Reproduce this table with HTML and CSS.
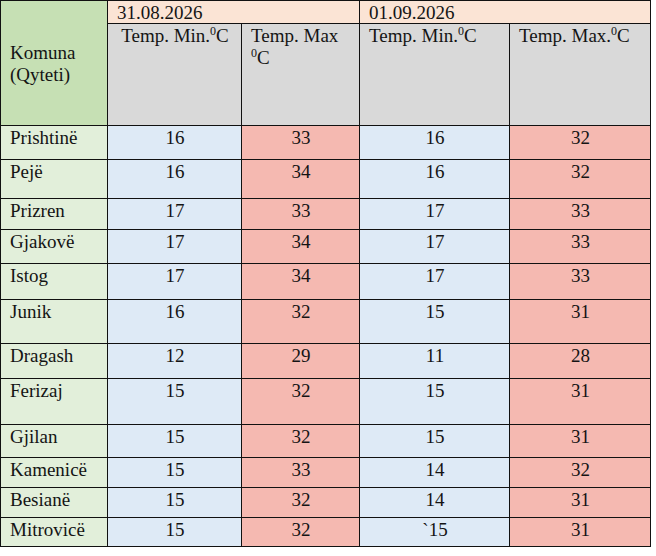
FILE: index.html
```html
<!DOCTYPE html>
<html lang="sq">
<head>
<meta charset="utf-8">
<title>Temperaturat</title>
<link rel="stylesheet" href="styles.css">
</head>
<body>
<table class="temps">
  <colgroup>
    <col class="c-city">
    <col class="c-min1">
    <col class="c-max1">
    <col class="c-min2">
    <col class="c-max2">
  </colgroup>
  <thead>
    <tr class="h-date">
      <th class="city-head" rowspan="2">Komuna<br>(Qyteti)</th>
      <th class="date" colspan="2">31.08.2026</th>
      <th class="date" colspan="2">01.09.2026</th>
    </tr>
    <tr class="h-cols">
      <th class="col-head center">Temp. Min.<sup>0</sup>C</th>
      <th class="col-head">Temp. Max<br><sup>0</sup>C</th>
      <th class="col-head">Temp. Min.<sup>0</sup>C</th>
      <th class="col-head">Temp. Max.<sup>0</sup>C</th>
    </tr>
  </thead>
  <tbody>
    <tr class="h34"><td class="city">Prishtinë</td><td class="min">16</td><td class="max">33</td><td class="min">16</td><td class="max">32</td></tr>
    <tr class="h39"><td class="city">Pejë</td><td class="min">16</td><td class="max">34</td><td class="min">16</td><td class="max">32</td></tr>
    <tr class="h31"><td class="city">Prizren</td><td class="min">17</td><td class="max">33</td><td class="min">17</td><td class="max">33</td></tr>
    <tr class="h34"><td class="city">Gjakovë</td><td class="min">17</td><td class="max">34</td><td class="min">17</td><td class="max">33</td></tr>
    <tr class="h36"><td class="city">Istog</td><td class="min">17</td><td class="max">34</td><td class="min">17</td><td class="max">33</td></tr>
    <tr class="h44"><td class="city">Junik</td><td class="min">16</td><td class="max">32</td><td class="min">15</td><td class="max">31</td></tr>
    <tr class="h35"><td class="city">Dragash</td><td class="min">12</td><td class="max">29</td><td class="min">11</td><td class="max">28</td></tr>
    <tr class="h46"><td class="city">Ferizaj</td><td class="min">15</td><td class="max">32</td><td class="min">15</td><td class="max">31</td></tr>
    <tr class="h33"><td class="city">Gjilan</td><td class="min">15</td><td class="max">32</td><td class="min">15</td><td class="max">31</td></tr>
    <tr class="h30"><td class="city">Kamenicë</td><td class="min">15</td><td class="max">33</td><td class="min">14</td><td class="max">32</td></tr>
    <tr class="h30"><td class="city">Besianë</td><td class="min">15</td><td class="max">32</td><td class="min">14</td><td class="max">31</td></tr>
    <tr class="h29"><td class="city">Mitrovicë</td><td class="min">15</td><td class="max">32</td><td class="min">`15</td><td class="max">31</td></tr>
  </tbody>
</table>
</body>
</html>
```

FILE: styles.css
```css
html, body {
  margin: 0;
  padding: 0;
  background: #ffffff;
}

body {
  font-family: "Liberation Serif", "Times New Roman", serif;
  font-size: 19px;
  line-height: 22px;
  color: #141414;
}

.temps {
  border-collapse: collapse;
  table-layout: fixed;
  width: 651px;
}

.c-city { width: 107px; }
.c-min1 { width: 134px; }
.c-max1 { width: 118px; }
.c-min2 { width: 150px; }
.c-max2 { width: 141px; }

.temps th,
.temps td {
  border: 1px solid #111111;
  padding: 1px 8px 0 9px;
  font-weight: normal;
  text-align: left;
  vertical-align: top;
  box-sizing: border-box;
}

.temps sup {
  font-size: 12px;
  line-height: 0;
  vertical-align: 7px;
}

.h-date { height: 23px; }
.h-cols { height: 102px; }

.city-head {
  background: #c6e0b4;
  vertical-align: middle !important;
}

.date {
  background: #fbe4d5;
  line-height: 21px;
}

.col-head {
  background: #d9d9d9;
}

.col-head.center {
  text-align: center !important;
}

.city {
  background: #e2efda;
}

.min {
  background: #deeaf6;
  text-align: center !important;
}

.max {
  background: #f5b9b1;
  text-align: center !important;
}

.h29 { height: 29px; }
.h30 { height: 30px; }
.h31 { height: 31px; }
.h33 { height: 33px; }
.h34 { height: 34px; }
.h35 { height: 35px; }
.h36 { height: 36px; }
.h39 { height: 39px; }
.h44 { height: 44px; }
.h46 { height: 46px; }
```
